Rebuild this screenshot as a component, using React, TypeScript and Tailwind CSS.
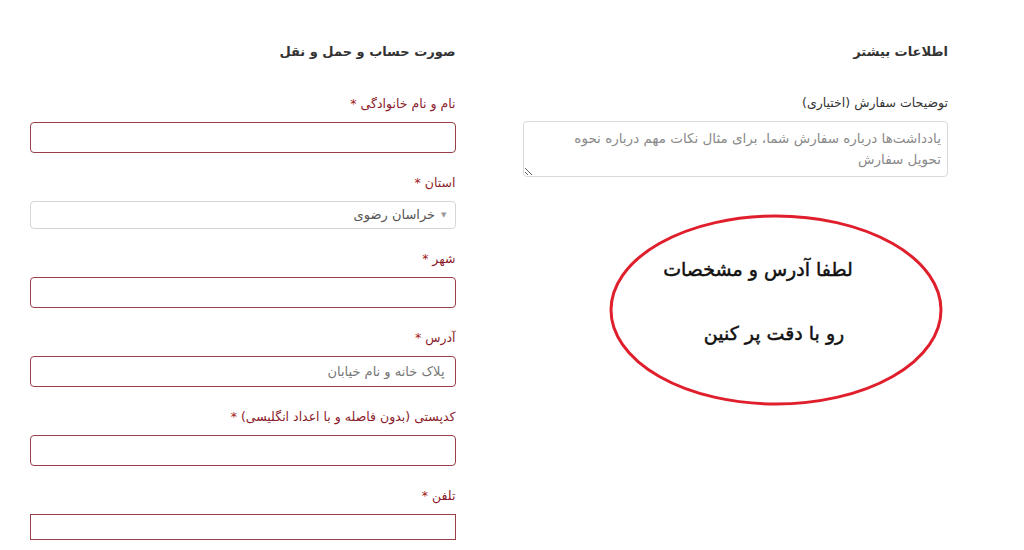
const fontStack = { fontFamily: '"DejaVu Sans", "Noto Sans", sans-serif' };

type FieldProps = {
  label: string;
  placeholder?: string;
  square?: boolean;
};

function Field({ label, placeholder, square }: FieldProps) {
  return (
    <div className="flex flex-col">
      <label className="text-[12.5px] leading-[18px] text-[#8b1c2b]">
        {label} <span className="text-[#a31515]">*</span>
      </label>
      <input
        placeholder={placeholder}
        className={
          'mt-[9px] w-full border border-[#983f4a] bg-white px-[10px] text-[13px] text-[#444] placeholder:text-[#777] outline-none ' +
          (square ? 'h-[26px] rounded-none' : 'h-[31px] rounded-[4px]')
        }
      />
    </div>
  );
}

function Notice() {
  return (
    <svg width="336" height="194" viewBox="0 0 336 194" className="block mr-[4px] mt-[36px]">
      <ellipse cx="168" cy="97" rx="165" ry="94" fill="white" stroke="#e01f2d" strokeWidth="3" />
      <text
        x="150"
        y="63"
        textAnchor="middle"
        fontSize="19"
        fill="#111"
        stroke="#111"
        strokeWidth="0.5"
        style={{ fontFamily: '"DejaVu Sans", sans-serif' }}
      >
        لطفا آدرس و مشخصات
      </text>
      <text
        x="166"
        y="127"
        textAnchor="middle"
        fontSize="19"
        fill="#111"
        stroke="#111"
        strokeWidth="0.5"
        style={{ fontFamily: '"DejaVu Sans", sans-serif' }}
      >
        رو با دقت پر کنین
      </text>
    </svg>
  );
}

export default function App() {
  return (
    <div dir="rtl" style={fontStack} className="w-[1024px] h-[550px] overflow-hidden bg-white">
      <div className="flex gap-[67px] pr-[76px] pl-[30px] pt-[42px]">
        {/* extra info column (right) */}
        <div className="flex-1">
          <h3 className="text-[13px] leading-[20px] font-bold text-[#333]">اطلاعات بیشتر</h3>
          <div className="mt-[32px] flex flex-col">
            <label className="text-[12.5px] leading-[18px] text-[#333]">توضیحات سفارش (اختیاری)</label>
            <textarea
              rows={2}
              placeholder={'یادداشت‌ها درباره سفارش شما، برای مثال نکات مهم درباره نحوه\nتحویل سفارش'}
              className="mt-[9px] h-[56px] w-full resize-y rounded-[4px] border border-[#d9d9d9] bg-white px-[6px] py-[6px] text-[13.5px] leading-[21px] text-[#444] placeholder:text-[#8a8a8a] outline-none"
            />
          </div>
          <Notice />
        </div>

        {/* billing column (left) */}
        <div className="flex-1">
          <h3 className="text-[13px] leading-[20px] font-bold text-[#333]">صورت حساب و حمل و نقل</h3>
          <div className="mt-[33px] flex flex-col gap-[21px]">
            <Field label="نام و نام خانوادگی" />
            <div className="flex flex-col">
              <label className="text-[12.5px] leading-[18px] text-[#8b1c2b]">
                استان <span className="text-[#a31515]">*</span>
              </label>
              <div className="mt-[9px] flex h-[28px] items-center gap-[6px] rounded-[4px] border border-[#d6d6d6] bg-white pr-[8px] text-[13px] text-[#555]">
                <span className="text-[7px] text-[#999]">▼</span>
                <span>خراسان رضوی</span>
              </div>
            </div>
            <Field label="شهر" />
            <Field label="آدرس" placeholder="پلاک خانه و نام خیابان" />
            <Field label="کدپستی (بدون فاصله و با اعداد انگلیسی)" />
            <Field label="تلفن" square />
          </div>
        </div>
      </div>
    </div>
  );
}
